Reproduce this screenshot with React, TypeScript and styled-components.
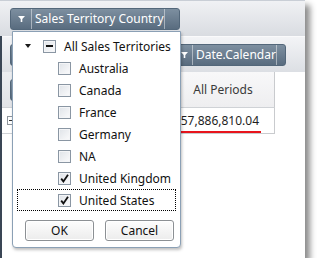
import React from "react";
import styled, { createGlobalStyle } from "styled-components";

const GlobalStyle = createGlobalStyle`
  body {
    margin: 0;
    background: #fff;
    font-family: "Noto Sans", "Open Sans", sans-serif;
  }
`;

const Frame = styled.div`
  position: relative;
  width: 305px;
  height: 258px;
  background: #fff;
  box-shadow: 5px 5px 6px rgba(0, 0, 0, 0.45);
  overflow: hidden;
  display: flex;
  flex-direction: column;
`;

const FilterBand = styled.div`
  height: 36px;
  box-sizing: border-box;
  border-top: 1px solid #c9ced6;
  background: linear-gradient(#f0f1f4, #d9dce1);
  display: flex;
  align-items: center;
  padding-left: 10px;
`;

const Lower = styled.div`
  flex: 1;
  border-left: 2px solid #3a4655;
  display: flex;
  flex-direction: column;
`;

const ColumnBand = styled.div`
  height: 36px;
  box-sizing: border-box;
  border-top: 1px solid #fafafb;
  background: linear-gradient(#f3f4f6, #dcdfe4);
  display: flex;
  align-items: center;
  padding-left: 8px;
  gap: 15px;
`;

const FieldButton = styled.div<{ $width: number }>`
  width: ${(p) => p.$width}px;
  height: 22px;
  box-sizing: border-box;
  display: flex;
  border: 1px solid #53677a;
  border-radius: 3px;
  background: linear-gradient(#7d8fa0, #596c7f);
  color: #fff;
  font-size: 12px;
  line-height: 20px;
  white-space: nowrap;
  overflow: hidden;
`;

const FilterSeg = styled.div<{ $width: number }>`
  width: ${(p) => p.$width}px;
  flex: none;
  display: flex;
  align-items: center;
  justify-content: center;
  border-right: 1px solid rgba(255, 255, 255, 0.45);
`;

const FieldLabel = styled.div`
  flex: 1;
  padding-left: 3px;
`;

const EndSeg = styled.div<{ $width: number }>`
  width: ${(p) => p.$width}px;
  flex: none;
  border-left: 1px solid rgba(255, 255, 255, 0.45);
`;

const Grid = styled.div`
  display: grid;
  grid-template-columns: 170px 103px;
  grid-template-rows: 36px 26px;
`;

const RowHeadCell = styled.div<{ $head?: boolean }>`
  box-sizing: border-box;
  display: flex;
  align-items: center;
  padding-left: ${(p) => (p.$head ? 8 : 5)}px;
  background: ${(p) => (p.$head ? "linear-gradient(#eceef1, #e1e3e7)" : "#fff")};
  border-bottom: 1px solid #cfd2d6;
`;

const ColumnHeadCell = styled.div`
  box-sizing: border-box;
  display: flex;
  align-items: center;
  justify-content: center;
  background: linear-gradient(#f8f8f9, #eeeef0);
  border-right: 1px solid #c9cbce;
  border-bottom: 1px solid #cfd2d6;
  font-size: 12px;
  color: #3a3a3a;
`;

const ValueCell = styled.div`
  box-sizing: border-box;
  display: flex;
  align-items: flex-end;
  justify-content: flex-end;
  padding-right: 13px;
  border-right: 1px solid #c9cbce;
  border-bottom: 1px solid #c9cbce;
  font-size: 12px;
  color: #1e1e1e;
`;

const Marked = styled.span`
  line-height: 14px;
  padding: 0 2px 3px 0;
  border-bottom: 2px solid #e8141c;
`;

const Expander = styled.div`
  width: 9px;
  height: 9px;
  box-sizing: border-box;
  border: 1px solid #8e959c;
  display: flex;
  align-items: center;
  justify-content: center;
  &::after {
    content: "";
    width: 5px;
    height: 1px;
    background: #333;
  }
`;

const Popup = styled.div`
  position: absolute;
  left: 12px;
  top: 31px;
  width: 169px;
  height: 217px;
  box-sizing: border-box;
  padding: 3px 4px 6px;
  background: #fff;
  border: 1px solid #8ba0b5;
  border-radius: 0 0 4px 4px;
  box-shadow: 1px 2px 3px rgba(0, 0, 0, 0.25);
  display: flex;
  flex-direction: column;
  color: #111;
  font-size: 12px;
`;

const TreeRow = styled.div<{ $indent: number; $focused?: boolean }>`
  height: 22px;
  box-sizing: border-box;
  display: flex;
  align-items: center;
  padding-left: ${(p) => p.$indent}px;
  border: 1px dotted ${(p) => (p.$focused ? "#000" : "transparent")};
  white-space: nowrap;
`;

const Caret = styled.div`
  width: 0;
  height: 0;
  border-left: 3px solid transparent;
  border-right: 3px solid transparent;
  border-top: 4px solid #1a1a1a;
  margin-right: 12px;
`;

const Box = styled.div`
  width: 13px;
  height: 13px;
  flex: none;
  box-sizing: border-box;
  border: 1px solid #8a96a3;
  background: linear-gradient(135deg, #dfe3e8, #fbfbfc);
  box-shadow: inset 0 0 0 1px #f4f5f7;
  display: flex;
  align-items: center;
  justify-content: center;
  margin-right: 8px;
`;

const Dash = styled.div`
  width: 7px;
  height: 2px;
  background: #111;
`;

const ButtonRow = styled.div`
  margin-top: auto;
  display: flex;
  gap: 11px;
  padding-left: 8px;
`;

const DialogButton = styled.button`
  width: 69px;
  height: 21px;
  box-sizing: border-box;
  padding: 0;
  border: 1px solid #8c9094;
  border-radius: 3px;
  background: linear-gradient(#fdfdfd, #ececec);
  box-shadow: inset 0 0 0 1px #fff;
  font-family: inherit;
  font-size: 12px;
  color: #111;
`;

const Funnel = () => (
  <svg width="7" height="6" viewBox="0 0 7 6">
    <polygon points="0,0 7,0 4.3,3 4.3,6 2.7,6 2.7,3" fill="#fff" />
  </svg>
);

const Check = () => (
  <svg width="11" height="11" viewBox="0 0 11 11">
    <path d="M2.2 5.6 L4.4 8.4 L9 1.8" fill="none" stroke="#111" strokeWidth="1.8" />
  </svg>
);

const territories = [
  { name: "Australia", checked: false },
  { name: "Canada", checked: false },
  { name: "France", checked: false },
  { name: "Germany", checked: false },
  { name: "NA", checked: false },
  { name: "United Kingdom", checked: true },
  { name: "United States", checked: true },
];

export default function App() {
  return (
    <>
      <GlobalStyle />
      <Frame>
        <FilterBand>
          <FieldButton $width={170}>
            <FilterSeg $width={20}>
              <Funnel />
            </FilterSeg>
            <FieldLabel>Sales Territory Country</FieldLabel>
            <EndSeg $width={16} />
          </FieldButton>
        </FilterBand>
        <Lower>
          <ColumnBand>
            <FieldButton $width={150} />
            <FieldButton $width={111}>
              <FilterSeg $width={16}>
                <Funnel />
              </FilterSeg>
              <FieldLabel>Date.Calendar</FieldLabel>
              <EndSeg $width={8} />
            </FieldButton>
          </ColumnBand>
          <Grid>
            <RowHeadCell $head>
              <FieldButton $width={150} />
            </RowHeadCell>
            <ColumnHeadCell>All Periods</ColumnHeadCell>
            <RowHeadCell>
              <Expander />
            </RowHeadCell>
            <ValueCell>
              <Marked>$57,886,810.04</Marked>
            </ValueCell>
          </Grid>
        </Lower>
        <Popup>
          <TreeRow $indent={7}>
            <Caret />
            <Box>
              <Dash />
            </Box>
            All Sales Territories
          </TreeRow>
          {territories.map((t, i) => (
            <TreeRow key={t.name} $indent={40} $focused={i === territories.length - 1}>
              <Box>{t.checked && <Check />}</Box>
              {t.name}
            </TreeRow>
          ))}
          <ButtonRow>
            <DialogButton>OK</DialogButton>
            <DialogButton>Cancel</DialogButton>
          </ButtonRow>
        </Popup>
      </Frame>
    </>
  );
}
